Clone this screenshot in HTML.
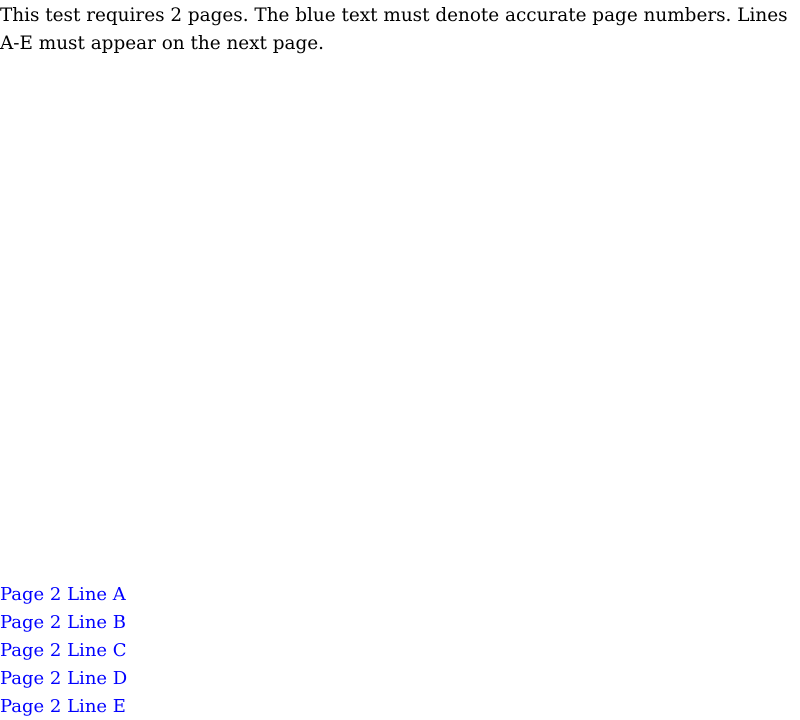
<!DOCTYPE html>
<html><head><meta charset="utf-8"><style>
html,body{margin:0;padding:0;background:#fff;width:800px;height:720px;overflow:hidden}
body{font-family:"DejaVu Serif","Liberation Serif",serif;font-size:18px;line-height:28px;color:#000;position:relative}
p{margin:0;position:absolute;left:0;top:2px;white-space:nowrap;font-size:18.4px}
.b{position:absolute;left:0;top:581px;color:#0000ff}
</style></head><body>
<p>This test requires 2 pages. The blue text must denote accurate page numbers. Lines<br>A-E must appear on the next page.</p>
<div class="b">Page 2 Line A<br>Page 2 Line B<br>Page 2 Line C<br>Page 2 Line D<br>Page 2 Line E</div>
</body></html>
